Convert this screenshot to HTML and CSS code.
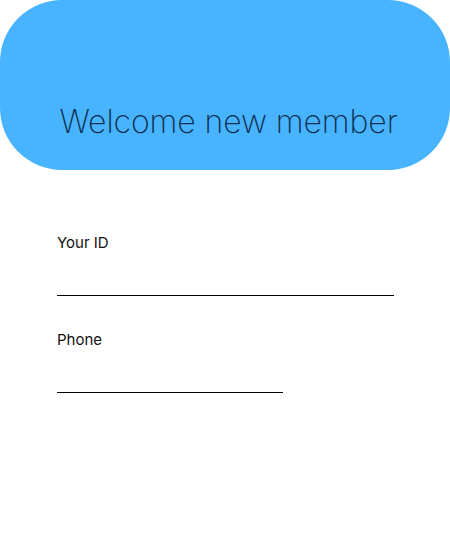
FILE: index.html
```html
<!DOCTYPE html>
<html>
<head>
<meta charset="utf-8">
<link rel="stylesheet" href="styles.css">
</head>
<body>
<header class="hero">
  <h1 class="title">Welcome new member</h1>
</header>
<main class="form">
  <div class="field">
    <label class="label">Your ID</label>
    <div class="line line-long"></div>
  </div>
  <div class="field">
    <label class="label">Phone</label>
    <div class="line line-short"></div>
  </div>
</main>
</body>
</html>
```
FILE: styles.css
```css
html, body {
  margin: 0;
  padding: 0;
  background: #ffffff;
  font-family: Inter, "Noto Sans", sans-serif;
}
.hero {
  height: 170px;
  background: #48b3ff;
  border-radius: 62px;
  display: flex;
  align-items: flex-end;
  justify-content: center;
  box-sizing: border-box;
  padding-bottom: 29px;
  padding-left: 7px;
}
.title {
  margin: 0;
  font-size: 32px;
  font-weight: 200;
  color: #0b2f4f;
  line-height: 38px;
  letter-spacing: -0.1px;
}
.form {
  padding: 64px 0 0 57px;
  display: flex;
  flex-direction: column;
  gap: 35px;
}
.field {
  display: flex;
  flex-direction: column;
}
.label {
  font-size: 15px;
  color: #111;
  line-height: 18px;
}
.line {
  margin-top: 43px;
  height: 1px;
  background: #000;
}
.line-long { width: 337px; }
.line-short { width: 226px; }
```
